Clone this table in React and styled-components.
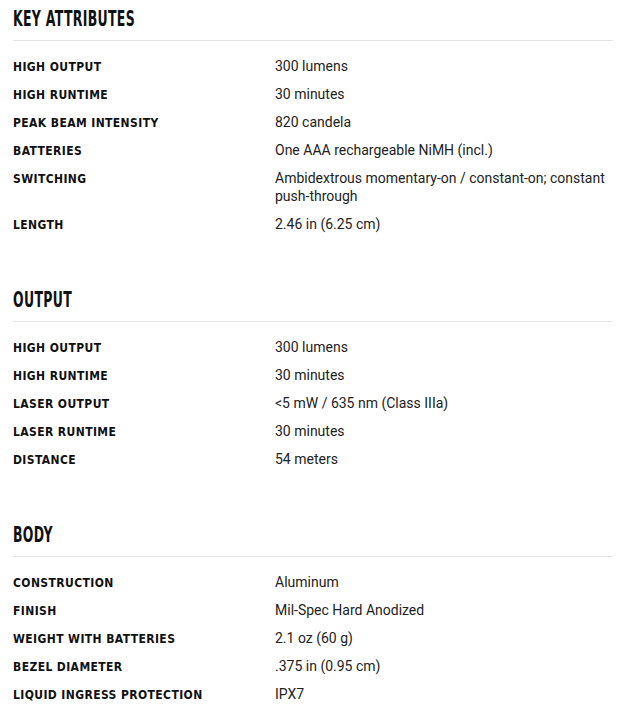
import React from "react";
import styled, { createGlobalStyle } from "styled-components";

const specs = [
  {
    title: "Key Attributes",
    rows: [
      ["High Output", "300 lumens"],
      ["High Runtime", "30 minutes"],
      ["Peak Beam Intensity", "820 candela"],
      ["Batteries", "One AAA rechargeable NiMH (incl.)"],
      ["Switching", "Ambidextrous momentary-on / constant-on; constant push-through"],
      ["Length", "2.46 in (6.25 cm)"],
    ],
  },
  {
    title: "Output",
    rows: [
      ["High Output", "300 lumens"],
      ["High Runtime", "30 minutes"],
      ["Laser Output", "<5 mW / 635 nm (Class IIIa)"],
      ["Laser Runtime", "30 minutes"],
      ["Distance", "54 meters"],
    ],
  },
  {
    title: "Body",
    rows: [
      ["Construction", "Aluminum"],
      ["Finish", "Mil-Spec Hard Anodized"],
      ["Weight With Batteries", "2.1 oz (60 g)"],
      ["Bezel Diameter", ".375 in (0.95 cm)"],
      ["Liquid Ingress Protection", "IPX7"],
    ],
  },
];

const GlobalStyle = createGlobalStyle`
  body {
    margin: 0;
    background: #ffffff;
    font-family: "DejaVu Sans Condensed", "DejaVu Sans", sans-serif;
  }
`;

const Page = styled.div`
  width: 600px;
  padding: 7px 20px 0 13px;
  display: flex;
  flex-direction: column;
  gap: 55px;
`;

const Section = styled.section`
  display: flex;
  flex-direction: column;
`;

const Heading = styled.h2`
  margin: 0;
  padding-bottom: 9px;
  border-bottom: 1px solid #e5e5e5;
  font-size: 21px;
  line-height: 24px;
  font-weight: 400;
  color: #111111;
`;

// the site's heading face is a tall narrow grotesk; squeeze the condensed one to match
const HeadingText = styled.span`
  display: inline-block;
  font-family: "DejaVu Sans Condensed", "DejaVu Sans", sans-serif;
  font-weight: 700;
  text-transform: uppercase;
  letter-spacing: 0.5px;
  transform: scaleX(0.66);
  transform-origin: left center;
`;

const List = styled.dl`
  margin: 16px 0 0;
  display: flex;
  flex-direction: column;
  gap: 10px;
`;

const Row = styled.div`
  display: grid;
  grid-template-columns: 262px 338px;
  align-items: start;
`;

const Label = styled.dt`
  padding-top: 2px;
  font-family: "DejaVu Sans Condensed", "DejaVu Sans", sans-serif;
  font-size: 12px;
  line-height: 16px;
  font-weight: 700;
  letter-spacing: 0.4px;
  text-transform: uppercase;
  color: #111111;
`;

const Value = styled.dd`
  margin: 0;
  font-family: Roboto, "DejaVu Sans", sans-serif;
  font-size: 14px;
  line-height: 18px;
  color: #222222;
`;

export default function App() {
  return (
    <>
      <GlobalStyle />
      <Page>
        {specs.map((section) => (
          <Section key={section.title}>
            <Heading>
              <HeadingText>{section.title}</HeadingText>
            </Heading>
            <List>
              {section.rows.map(([label, value]) => (
                <Row key={label}>
                  <Label>{label}</Label>
                  <Value>{value}</Value>
                </Row>
              ))}
            </List>
          </Section>
        ))}
      </Page>
    </>
  );
}
